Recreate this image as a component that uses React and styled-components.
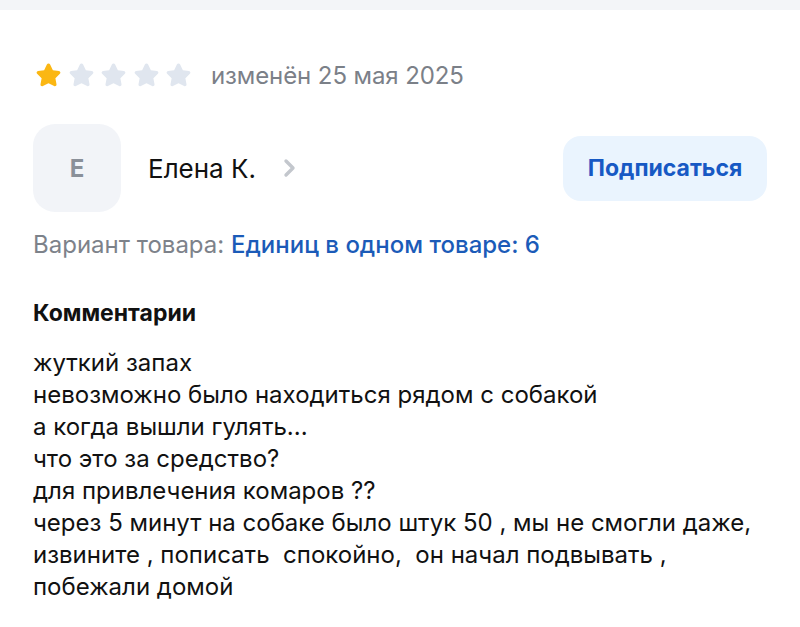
import React from "react";
import styled, { createGlobalStyle } from "styled-components";

const Global = createGlobalStyle`
  html, body { margin: 0; padding: 0; background: #fff; }
  body { font-family: Inter, "Open Sans", sans-serif; -webkit-font-smoothing: antialiased; }
`;

const Page = styled.div`
  width: 800px;
  height: 627px;
  overflow: hidden;
  background: #fff;
`;

const TopBand = styled.div`
  height: 10px;
  background: #f3f5f8;
`;

const Content = styled.div`
  padding: 48px 33px 0 33px;
  display: flex;
  flex-direction: column;
`;

const RatingRow = styled.div`
  display: flex;
  align-items: center;
  height: 34px;
  padding-left: 3px;
`;

const Stars = styled.div`
  display: flex;
  gap: 7.5px;
  margin-right: 20px;
`;

const DateText = styled.span`
  font-size: 24px;
  color: #7b8088;
  letter-spacing: -0.1px;
`;

const AuthorRow = styled.div`
  display: flex;
  align-items: center;
  margin-top: 32px;
`;

const Avatar = styled.div`
  width: 88px;
  height: 88px;
  border-radius: 22px;
  background: #f2f4f8;
  display: flex;
  align-items: center;
  justify-content: center;
  font-size: 24px;
  font-weight: 700;
  color: #8a9099;
  flex-shrink: 0;
`;

const Name = styled.div`
  margin-left: 27px;
  font-size: 26px;
  color: #111;
  display: flex;
  align-items: center;
  gap: 27px;
`;

const Spacer = styled.div`
  flex: 1;
`;

const SubscribeButton = styled.button`
  width: 204px;
  height: 65px;
  border: none;
  border-radius: 18px;
  background: #eaf4fe;
  color: #1759c4;
  font-family: Inter, "Open Sans", sans-serif;
  font-size: 23px;
  font-weight: 700;
  cursor: pointer;
`;

const Variant = styled.div`
  margin-top: 17px;
  font-size: 24px;
  line-height: 32px;
  color: #7d828a;
`;

const VariantValue = styled.span`
  color: #1b5bb8;
  font-weight: 500;
`;

const SectionTitle = styled.div`
  margin-top: 36px;
  font-size: 23px;
  font-weight: 700;
  color: #111;
  line-height: 32px;
`;

const Body = styled.div`
  margin-top: 18px;
  font-size: 24px;
  color: #111;
`;

const Line = styled.div`
  line-height: 32px;
  white-space: pre;
`;

const Star = ({ filled }) => (
  <svg width="25" height="25" viewBox="2 2 20 20">
    <path
      d="M12 2.4c.6 0 1 .3 1.3.8l2.2 4.5 4.9.7c1.1.2 1.500 1.5.7 2.2l-3.6 3.5.9 4.9c.2 1.1-1 1.9-1.9 1.4L12 18.1l-4.5 2.3c-1 .5-2.1-.3-1.9-1.4l.9-4.9-3.6-3.5c-.8-.7-.4-2 .7-2.2l4.9-.7 2.2-4.5c.3-.5.7-.8 1.3-.8z"
      fill={filled ? "#fbb713" : "#e0e6ef"}
    />
  </svg>
);

const Chevron = () => (
  <svg width="14" height="20" viewBox="0 0 14 20">
    <path d="M3 3l7 7-7 7" fill="none" stroke="#c3c7cd" strokeWidth="3.4" strokeLinecap="round" strokeLinejoin="round" />
  </svg>
);

const lines = [
  "жуткий запах",
  "невозможно было находиться рядом с собакой",
  "а когда вышли гулять...",
  "что это за средство?",
  "для привлечения комаров ??",
  "через 5 минут на собаке было штук 50 , мы не смогли даже,",
  "извините , пописать  спокойно,  он начал подвывать ,",
  "побежали домой",
];

export default function App() {
  return (
    <Page>
      <Global />
      <TopBand />
      <Content>
        <RatingRow>
          <Stars>
            {[0, 1, 2, 3, 4].map((i) => (
              <Star key={i} filled={i === 0} />
            ))}
          </Stars>
          <DateText>изменён 25 мая 2025</DateText>
        </RatingRow>
        <AuthorRow>
          <Avatar>Е</Avatar>
          <Name>
            Елена К.
            <Chevron />
          </Name>
          <Spacer />
          <SubscribeButton>Подписаться</SubscribeButton>
        </AuthorRow>
        <Variant>
          Вариант товара: <VariantValue>Единиц в одном товаре: 6</VariantValue>
        </Variant>
        <SectionTitle>Комментарии</SectionTitle>
        <Body>
          {lines.map((l, i) => (
            <Line key={i}>{l}</Line>
          ))}
        </Body>
      </Content>
    </Page>
  );
}
